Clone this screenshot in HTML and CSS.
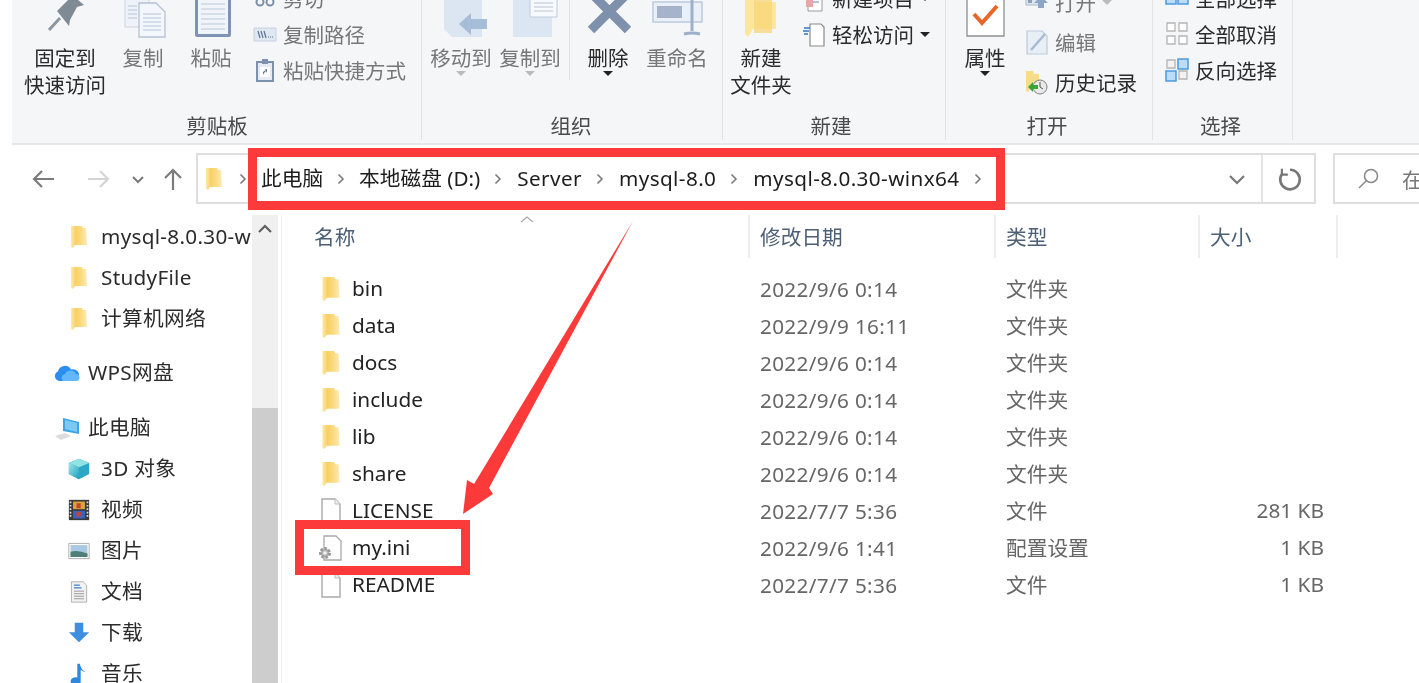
FILE: index.html
```html
<!DOCTYPE html>
<html lang="zh-CN">
<head>
<meta charset="utf-8">
<title>mysql-8.0.30-winx64</title>
<link rel="stylesheet" href="styles.css">
</head>
<body>
<svg class="sprite" aria-hidden="true">
  <defs>
    <linearGradient id="fg" x1="0" x2="1" y1="0" y2="0"><stop offset="0" stop-color="#fde9ae"/><stop offset=".3" stop-color="#f8d063"/><stop offset=".65" stop-color="#fbdc85"/><stop offset="1" stop-color="#fdeab5"/></linearGradient>
    <linearGradient id="cube" x1="0" x2="1" y1="0" y2="1"><stop offset="0" stop-color="#9fe6e6"/><stop offset="1" stop-color="#1b9fc0"/></linearGradient>
    <symbol id="folder" viewBox="0 0 20 24"><path d="M2 1h11l1 2h3l1 17H6l-2 3-2-1z" fill="url(#fg)"/></symbol>
    <symbol id="doc" viewBox="0 0 24 26"><path d="M3 1h13l5 5v19H3z" fill="#fff" stroke="#a9a9a9" stroke-width="1.4"/><path d="M16 1v5h5" fill="#f0f0f0" stroke="#bcbcbc"/></symbol>
    <symbol id="chev" viewBox="0 0 10 14"><path d="M2.500 2.500 7 7l-4.500 4.500" fill="none" stroke="#7a7a7a" stroke-width="1.600"/></symbol>
  </defs>
</svg>

<section class="ribbon">
  <div class="group g1">
    <div class="body">
      <div class="tool wide">
        <svg class="big" viewBox="0 0 60 45"><path d="M14 30 25 18" stroke="#8d979f" stroke-width="3"/><path d="M22 11 33 0l3-6 13 11-7 2-7 13-1 6z" fill="#7f8b94"/></svg>
        <span class="lbl">固定到<br>快速访问</span>
      </div>
      <div class="tool off">
        <svg class="big" viewBox="0 0 60 45"><path d="M12-3h24v30H12z" fill="#eef2f8" stroke="#cbd5e3"/><path d="M26 3h17l9 9v25H26z" fill="#f3f6fa" stroke="#b4c2d6" stroke-width="1.300"/><path d="M30 14h18M30 18h18M30 22h18M30 26h18M30 30h18M15 6h9M15 10h9M15 14h9M15 18h9" stroke="#b6c4d8"/></svg>
        <span class="lbl">复制</span>
      </div>
      <div class="tool off">
        <svg class="big" viewBox="0 0 60 45"><path d="M14-3h36v38a2 2 0 0 1-2 2H16a2 2 0 0 1-2-2z" fill="#8093b4"/><path d="M17-3h30v37H17z" fill="#f1f4f9"/><path d="M20 4h24M20 9h24M20 14h24M20 19h24M20 24h24M20 29h24" stroke="#bac7da"/></svg>
        <span class="lbl">粘贴</span>
      </div>
      <div class="small-col rows36">
        <div class="row off"><svg class="ic" viewBox="0 0 24 24"><circle cx="7" cy="16" r="3.500" fill="none" stroke="#7b8fa9" stroke-width="2"/><circle cx="17" cy="16" r="3.500" fill="none" stroke="#7b8fa9" stroke-width="2"/><path d="M8 13 15 2M16 13 9 2" stroke="#7b8fa9" stroke-width="2"/></svg><span>剪切</span></div>
        <div class="row off"><svg class="ic" viewBox="0 0 24 24"><path d="M1 6h22v13H1z" fill="#dfe7f2" stroke="#c6d1e0"/><path d="M5 9l2 7M8 9l2 7M11 9l2 7" stroke="#5e7391" stroke-width="1.200"/><path d="M15 15h6" stroke="#5e7391" stroke-dasharray="1 1"/></svg><span>复制路径</span></div>
        <div class="row off"><svg class="ic" viewBox="0 0 24 24"><path d="M4 4h16v19H4z" fill="#e6ebf3" stroke="#7d90ad" stroke-width="2"/><path d="M9 1h6v5H9z" fill="#7d90ad"/><path d="M7 9h10v10H7z" fill="#fff"/><path d="M10 17v-3l3-2h-2l3-1v4l-1-2-2 2z" fill="#5a6f8e"/></svg><span>粘贴快捷方式</span></div>
      </div>
    </div>
    <div class="name">剪贴板</div>
  </div>

  <div class="group g2">
    <div class="body">
      <div class="tool off">
        <svg class="big" viewBox="0 0 60 45"><path d="M13-3h38v40H21l-8-8z" fill="#dce6f3"/><path d="M29 25 41 14v6h16v10H41v6z" transform="translate(-1 -1)" fill="#a7bcd6"/></svg>
        <span class="lbl">移动到</span><i class="caret pale"></i>
      </div>
      <div class="tool off">
        <svg class="big" viewBox="0 0 60 45"><path d="M13-3h39v40H13z" fill="#dce6f3"/><path d="M30-3h27v20H30z" fill="#f7f9fc" stroke="#bccadd"/><path d="M34 3h19M34 7h19M34 11h19" stroke="#b6c4d8"/></svg>
        <span class="lbl">复制到</span><i class="caret pale"></i>
      </div>
      <div class="sep"></div>
      <div class="tool">
        <svg class="big" viewBox="0 0 60 45"><path d="M13-7 50 30M50-7 13 30" stroke="#7f90ac" stroke-width="9"/></svg>
        <span class="lbl">删除</span><i class="caret"></i>
      </div>
      <div class="tool off">
        <svg class="big" viewBox="0 0 60 45"><path d="M6 2h49v20H6z" fill="#eaf0f8" stroke="#bccadd" stroke-width="1.500"/><path d="M10 6h25v12H10z" fill="#a5b4ca"/><path d="M45-3v34" stroke="#9db0ca" stroke-width="3"/><path d="M37 34q8-2 16 0" fill="none" stroke="#9db0ca" stroke-width="3"/></svg>
        <span class="lbl">重命名</span>
      </div>
    </div>
    <div class="name">组织</div>
  </div>

  <div class="group g3">
    <div class="body">
      <div class="tool">
        <svg class="big" viewBox="0 0 60 45"><path d="M14-3h8l3 5h20v27H22l-5 8-3-3z" fill="#fce6a0"/><path d="M23-3h18v36H23z" fill="#f8d46f" opacity=".7"/></svg>
        <span class="lbl">新建<br>文件夹</span>
      </div>
      <div class="small-col rows36">
        <div class="row"><svg class="ic" viewBox="0 0 24 24"><path d="M6 4h14v21H6z" fill="#fff" stroke="#9a9a9a"/><path d="M9 8h8M9 12h8M9 16h8" stroke="#5d86c4"/><path d="M4 13h7v8H4z" fill="#e6a7a7"/></svg><span>新建项目</span><i class="caret inrow"></i></div>
        <div class="row"><svg class="ic" viewBox="0 0 24 24"><path d="M8 2h11l3 3v19H8z" fill="#fff" stroke="#8a8a8a" stroke-width="1.200"/><path d="M2 6h6M1 9h6M2 12h4" stroke="#2f77c8" stroke-width="1.500"/></svg><span>轻松访问</span><i class="caret inrow"></i></div>
      </div>
    </div>
    <div class="name">新建</div>
  </div>

  <div class="group g4">
    <div class="body">
      <div class="tool">
        <svg class="big" viewBox="0 0 60 45"><path d="M12-3h37v39H12z" fill="#fff" stroke="#8e8e8e" stroke-width="1.300"/><path d="M19 14l8 9 15-17" fill="none" stroke="#e8662a" stroke-width="4"/></svg>
        <span class="lbl">属性</span><i class="caret"></i>
      </div>
      <div class="small-col rows40">
        <div class="row off"><svg class="ic" viewBox="0 0 24 24"><path d="M1 0h14v15H1z" fill="#dfe6f0" stroke="#a9b8cc"/><path d="M3 3h4v4H3zM3 9h4v4H3z" fill="#8ba0bc"/><path d="M16 6l7 7h-4v5h-6v-5H9z" fill="#8ca6c7"/></svg><span>打开</span><i class="caret inrow pale"></i></div>
        <div class="row off"><svg class="ic" viewBox="0 0 24 24"><path d="M2 1h15l5 5v18H2z" fill="#e8eef6" stroke="#bdcadb" stroke-width="1.200"/><path d="M6 20 20 4" stroke="#a9bbd2" stroke-width="2.500"/></svg><span>编辑</span></div>
        <div class="row"><svg class="ic" viewBox="0 0 24 24"><path d="M1 1h7l1 3h5v15H5l-2 3-2-1z" fill="#f9dc8a"/><circle cx="15" cy="17" r="7" fill="#e9e9e9" stroke="#808080"/><path d="M15 12v5l3 2" fill="none" stroke="#555"/><path d="M3 17l5-5v3h5v4H8v3z" fill="#3aa33a"/></svg><span>历史记录</span></div>
      </div>
    </div>
    <div class="name">打开</div>
  </div>

  <div class="group g5">
    <div class="body">
      <div class="small-col rows36">
        <div class="row"><svg class="ic" viewBox="0 0 24 24"><path d="M1 8h10v10H1zM13 8h10v10H13z" fill="#bcdcf7" stroke="#4b9be0" stroke-width="1.500"/></svg><span>全部选择</span></div>
        <div class="row"><svg class="ic" viewBox="0 0 24 24"><path d="M2 1h8v8H2zM14 1h8v8h-8zM2 14h8v8H2zM14 14h8v8h-8z" fill="#fff" stroke="#b5b5b5" stroke-width="1.300"/></svg><span>全部取消</span></div>
        <div class="row"><svg class="ic" viewBox="0 0 24 24"><path d="M2 2h8v8H2zM14 13h8v8h-8z" fill="#f3f3f3" stroke="#b5b5b5" stroke-width="1.300"/><path d="M13 1h10v10H13zM1 13h10v10H1z" fill="#bcdcf7" stroke="#4b9be0" stroke-width="1.500"/></svg><span>反向选择</span></div>
      </div>
    </div>
    <div class="name">选择</div>
  </div>
</section>

<nav class="address-row">
  <svg class="nav" viewBox="0 0 24 24"><path d="M2 12h20M10 4l-8 8 8 8" fill="none" stroke="#7b7b7b" stroke-width="2.200"/></svg>
  <svg class="nav nav-fwd" viewBox="0 0 24 24"><path d="M2 12h20M14 4l8 8-8 8" fill="none" stroke="#d4d4d4" stroke-width="2.200"/></svg>
  <svg class="nav nav-down" viewBox="0 0 24 24"><path d="M7 10l5 5 5-5" fill="none" stroke="#7b7b7b" stroke-width="2"/></svg>
  <svg class="nav nav-up" viewBox="0 0 24 24"><path d="M12 23V3M4 11l8-8 8 8" fill="none" stroke="#7b7b7b" stroke-width="2.200"/></svg>
  <div class="addr">
    <svg class="addr-folder"><use href="#folder"/></svg>
    <svg class="crumb-chev first"><use href="#chev"/></svg>
    <span class="cjk">此电脑</span><svg class="crumb-chev tight"><use href="#chev"/></svg>
    <span class="cjk">本地磁盘 (D:)</span><svg class="crumb-chev"><use href="#chev"/></svg>
    <span>Server</span><svg class="crumb-chev"><use href="#chev"/></svg>
    <span>mysql-8.0</span><svg class="crumb-chev"><use href="#chev"/></svg>
    <span>mysql-8.0.30-winx64</span><svg class="crumb-chev"><use href="#chev"/></svg>
    <svg class="addr-drop" viewBox="0 0 24 24"><path d="M5 9l7 7 7-7" fill="none" stroke="#777" stroke-width="2.200"/></svg>
    <div class="refresh"><svg viewBox="0 0 24 24"><path d="M12 3.500A9 9 0 1 1 4.500 7.500" fill="none" stroke="#777" stroke-width="2.400"/><path d="M4.500 2.500v5.500h5.500" fill="none" stroke="#777" stroke-width="2"/></svg></div>
  </div>
  <div class="search">
    <svg viewBox="0 0 24 24"><circle cx="14" cy="9" r="6.500" fill="none" stroke="#888" stroke-width="1.500"/><path d="M9 14l-7 7" stroke="#888" stroke-width="1.500"/></svg>
    <span>在</span>
  </div>
</nav>

<main class="main">
  <aside class="sidebar">
    <div class="s-row l2"><svg class="s-ic"><use href="#folder"/></svg><span>mysql-8.0.30-winx64</span></div>
    <div class="s-row l2"><svg class="s-ic"><use href="#folder"/></svg><span>StudyFile</span></div>
    <div class="s-row l2"><svg class="s-ic"><use href="#folder"/></svg><span>计算机网络</span></div>
    <div class="s-row l1 wps"><svg class="s-ic" viewBox="0 0 26 24"><path d="M5 20a5 5 0 0 1-1-9.500 7 7 0 0 1 13-2 6 6 0 0 1 4 11.500z" fill="#2a8ef0"/><path d="M9 20a4 4 0 0 1 2-7 6 6 0 0 1 11 0 3.500 3.500 0 0 1 0 7z" fill="#62b8fb"/></svg><span>WPS网盘</span></div>
    <div class="s-row l1 pc"><svg class="s-ic" viewBox="0 0 26 24"><path d="M9 2l16 4v12L9 15z" fill="#3ba5e8"/><path d="M11 4l12 3v9l-12-3z" fill="#7cc9f4"/><path d="M1 20l10-3 6 3-10 4z" fill="#dcdcdc"/></svg><span>此电脑</span></div>
    <div class="s-row l2"><svg class="s-ic" viewBox="0 0 26 24"><path d="M13 0l12 5v13l-12 6-12-6V5z" fill="#2ca7c6"/><path d="M13 0l12 5-12 5L1 5z" fill="#8fe3e3"/><path d="M1 5l12 5v14L1 18z" fill="url(#cube)"/></svg><span>3D 对象</span></div>
    <div class="s-row l2"><svg class="s-ic" viewBox="0 0 26 26"><path d="M1 1h24v24H1z" fill="#3a3a3a"/><path d="M6 3h14v9H6z" fill="#d9a33a"/><path d="M6 14h14v9H6z" fill="#3a64c4"/><path d="M10 5h5v6h-5zM10 15h5v6h-5z" fill="#c4442f"/><path d="M3 3v20M23 3v20" stroke="#ddd" stroke-width="2" stroke-dasharray="2 2"/></svg><span>视频</span></div>
    <div class="s-row l2"><svg class="s-ic" viewBox="0 0 26 20"><path d="M1 1h24v18H1z" fill="#fff" stroke="#a0a0a0"/><path d="M3 3h20v14H3z" fill="#a9c9e3"/><path d="M3 11q8-3 20 2v4H3z" fill="#4f7d77"/></svg><span>图片</span></div>
    <div class="s-row l2"><svg class="s-ic" viewBox="0 0 26 26"><path d="M4 1h14l4 4v20H4z" fill="#f2f2f2" stroke="#a5a5a5"/><path d="M7 5h7M7 8h9" stroke="#3a85d0" stroke-width="1.500"/><path d="M7 12h12M7 15h12M7 18h12M7 21h12" stroke="#8b8b8b"/></svg><span>文档</span></div>
    <div class="s-row l2"><svg class="s-ic" viewBox="0 0 26 24"><path d="M8 0h10v11h7L13 23 1 11h7z" fill="#3f8fe0"/></svg><span>下载</span></div>
    <div class="s-row l2"><svg class="s-ic" viewBox="0 0 26 26"><path d="M11 1h3q1 7 7 10-4-1-6-3v13a6 5 0 1 1-4-4z" fill="#2f88dc"/></svg><span>音乐</span></div>
  </aside>

  <div class="scrollbar">
    <svg class="sb-up" viewBox="0 0 26 30"><path d="M7 17l6-6 6 6" fill="none" stroke="#606060" stroke-width="2.200"/></svg>
    <div class="thumb"></div>
  </div>

  <section class="files">
    <header class="f-head">
      <div class="h-cell"><span>名称</span><svg class="sort" viewBox="0 0 16 8"><path d="M2 7l6-5 6 5" fill="none" stroke="#a8a8a8" stroke-width="1.200"/></svg></div>
      <div class="h-cell"><span>修改日期</span></div>
      <div class="h-cell"><span>类型</span></div>
      <div class="h-cell"><span>大小</span></div>
    </header>
    <div class="f-list">
      <div class="f-row"><div class="fn"><svg class="f-ic"><use href="#folder"/></svg>bin</div><div class="fd">2022/9/6 0:14</div><div class="fm">文件夹</div><div class="fs"></div></div>
      <div class="f-row"><div class="fn"><svg class="f-ic"><use href="#folder"/></svg>data</div><div class="fd">2022/9/9 16:11</div><div class="fm">文件夹</div><div class="fs"></div></div>
      <div class="f-row"><div class="fn"><svg class="f-ic"><use href="#folder"/></svg>docs</div><div class="fd">2022/9/6 0:14</div><div class="fm">文件夹</div><div class="fs"></div></div>
      <div class="f-row"><div class="fn"><svg class="f-ic"><use href="#folder"/></svg>include</div><div class="fd">2022/9/6 0:14</div><div class="fm">文件夹</div><div class="fs"></div></div>
      <div class="f-row"><div class="fn"><svg class="f-ic"><use href="#folder"/></svg>lib</div><div class="fd">2022/9/6 0:14</div><div class="fm">文件夹</div><div class="fs"></div></div>
      <div class="f-row"><div class="fn"><svg class="f-ic"><use href="#folder"/></svg>share</div><div class="fd">2022/9/6 0:14</div><div class="fm">文件夹</div><div class="fs"></div></div>
      <div class="f-row"><div class="fn"><svg class="f-ic"><use href="#doc"/></svg>LICENSE</div><div class="fd">2022/7/7 5:36</div><div class="fm">文件</div><div class="fs">281 KB</div></div>
      <div class="f-row"><div class="fn"><svg class="f-ic" viewBox="0 0 24 26"><path d="M5 1h12l5 5v19H5z" fill="#fff" stroke="#a9a9a9" stroke-width="1.300"/><circle cx="6" cy="18" r="4.500" fill="#b5b5b5" stroke="#9a9a9a" stroke-width="3" stroke-dasharray="2.500 1.500"/><circle cx="6" cy="18" r="1.800" fill="#f2f2f2"/></svg>my.ini</div><div class="fd">2022/9/6 1:41</div><div class="fm">配置设置</div><div class="fs">1 KB</div></div>
      <div class="f-row"><div class="fn"><svg class="f-ic"><use href="#doc"/></svg>README</div><div class="fd">2022/7/7 5:36</div><div class="fm">文件</div><div class="fs">1 KB</div></div>
    </div>
  </section>
</main>

<div class="mark mark-path"></div>
<div class="mark mark-file"></div>
<svg class="mark-arrow" viewBox="0 0 1419 683"><path d="M633 221 489 488l4 6-30 20 4-34 7 4z" fill="#fd3a3a"/></svg>
</body>
</html>
```

FILE: styles.css
```css
* { box-sizing: border-box; }
html, body { margin: 0; height: 683px; overflow: hidden; background: #fff; }
body {
  font-family: "Noto Sans", "Noto Sans CJK SC", sans-serif;
  font-size: 20.7px;
  color: #2b2b2b;
  filter: blur(.5px);
}
.sprite { display: block; width: 0; height: 0; }

/* ribbon */
.ribbon {
  display: flex;
  height: 145px;
  margin-left: 12px;
  padding-bottom: 3px;
  background: #f5f6f7;
  border-bottom: 2px solid #e6e6e6;
  font-size: 20.5px;
}
.group { display: flex; flex-direction: column; border-right: 1px solid #e2e3e5; }
.g1 { width: 410px; padding-left: 12px; }
.g2 { width: 301px; padding-left: 8px; }
.g3 { width: 223px; padding-left: 7px; }
.g4 { width: 207px; padding-left: 8px; }
.g5 { width: 140px; padding-left: 12px; }
.body { display: flex; gap: 7px; height: 113px; }
.g1 .body { gap: 6px; }
.name { text-align: center; line-height: 27px; color: #4a4a4a; }
.g1 .name { margin-left: -11px; }
.g2 .name { margin-left: -8px; margin-right: 2px; }
.g3 .name { margin-left: -7px; margin-right: 6px; }
.g4 .name { margin-left: -8px; margin-right: 4px; }
.g5 .name { margin-left: -12px; margin-right: 4px; }
.tool { display: flex; flex-direction: column; align-items: center; width: 62px; flex: none; }
.tool.wide { width: 82px; }
.big { display: block; width: 60px; height: 45px; flex: none; overflow: visible; }
.lbl { line-height: 27px; text-align: center; white-space: nowrap; }
.off { color: #777; }
.sep { width: 1px; height: 80px; margin-left: 1px; background: #e2e3e5; }
.caret { display: block; width: 0; height: 0; margin-top: -1px; border: 5px solid transparent; border-bottom: 0; border-top-color: #222; }
.caret.pale { border-top-color: #bbb; }
.caret.inrow { margin: 0 0 0 6px; }
.small-col { margin-left: 5px; }
.g3 .small-col { margin-left: 3px; }
.g4 .small-col { margin-left: 2px; }
.g5 .small-col { margin-left: 0; }
.rows36 { margin-top: -20px; }
.rows36 .row { height: 36px; }
.rows40 { margin-top: -18px; }
.rows40 .row { height: 40px; }
.row { display: flex; align-items: center; white-space: nowrap; }
.ic { width: 24px; height: 24px; flex: none; margin-right: 6px; overflow: visible; }

/* address */
.address-row { display: flex; align-items: center; height: 70px; padding: 8px 0 11px 32px; }
.nav { width: 24px; height: 24px; flex: none; }
.nav-fwd { margin-left: 30px; }
.nav-down { margin-left: 16px; }
.nav-up { margin-left: 11px; }
.addr {
  display: flex;
  align-items: center;
  width: 1120px;
  height: 51px;
  margin-left: 11px;
  padding-left: 6px;
  flex: none;
  border: 2px solid #dedede;
  line-height: 27px;
  letter-spacing: .4px;
  color: #1c1c1c;
  white-space: nowrap;
}
.cjk { letter-spacing: 0; }
.addr-folder { width: 20px; height: 24px; flex: none; margin-right: 4px; }
.crumb-chev { width: 10px; height: 14px; flex: none; margin: 0 14px 0 13px; }
.crumb-chev.tight { margin: 0 13px; }
.crumb-chev.first { margin: 0 13px 0 10px; }
.addr-drop { width: 24px; height: 24px; flex: none; margin-left: auto; margin-right: 12px; }
.refresh { display: flex; align-items: center; justify-content: center; width: 53px; height: 100%; padding-left: 3px; border-left: 2px solid #e4e4e4; }
.refresh svg { width: 26px; height: 26px; }
.search {
  display: flex;
  align-items: center;
  width: 200px;
  height: 51px;
  margin-left: 17px;
  padding-left: 22px;
  flex: none;
  border: 2px solid #dedede;
  color: #777;
}
.search svg { width: 24px; height: 24px; flex: none; margin-right: 21px; }

/* main */
.main { display: flex; height: 468px; overflow: hidden; line-height: 27px; }
.sidebar { width: 252px; flex: none; overflow: hidden; white-space: nowrap; letter-spacing: .3px; }
.s-row { display: flex; align-items: center; height: 41px; padding-top: 2px; overflow: hidden; }
.l2 { padding-left: 68px; }
.l1 { padding-left: 54px; }
.s-ic { width: 22px; height: 24px; flex: none; margin-right: 11px; }
.l1 .s-ic { width: 26px; margin-right: 8px; }
.wps { margin-top: 13px; }
.pc { margin-top: 14px; }
.scrollbar { display: flex; flex-direction: column; width: 26px; flex: none; background: #f0f0f0; }
.sb-up { width: 26px; height: 30px; flex: none; }
.thumb { flex: 1; margin-top: 163px; background: #cdcdcd; }
.files { flex: 1; margin-left: 3px; border-left: 1px solid #f1f1f1; }
.f-head, .f-row { display: grid; grid-template-columns: 468px 246px 204px 138px; }
.f-head { height: 43px; color: #4e6076; }
.h-cell { position: relative; display: flex; align-items: center; padding-top: 2px; padding-left: 10px; border-right: 2px solid #eeeeee; }
.h-cell:first-child { padding-left: 32px; }
.sort { position: absolute; left: 237px; top: 0; width: 16px; height: 8px; }
.f-list { padding-top: 12px; }
.f-row { height: 37px; align-items: center; }
.fn { display: flex; align-items: center; padding-left: 37px; color: #222; font-size: 20.8px; }
.f-ic { width: 24px; height: 26px; flex: none; margin-right: 9px; }
.fd { padding: 1px 0 0 10px; color: #666; letter-spacing: .35px; }
.fm { padding: 1px 0 0 10px; color: #666; }
.fs { padding-right: 14px; text-align: right; color: #666; font-size: 20.8px; }

/* annotations drawn over the screenshot */
.mark { position: absolute; border: 9px solid #fd3a3a; }
.mark-path { left: 248px; top: 148px; width: 757px; height: 62px; }
.mark-file { left: 295px; top: 520px; width: 175px; height: 55px; }
.mark-arrow { position: absolute; left: 0; top: 0; width: 1419px; height: 683px; pointer-events: none; }
```
